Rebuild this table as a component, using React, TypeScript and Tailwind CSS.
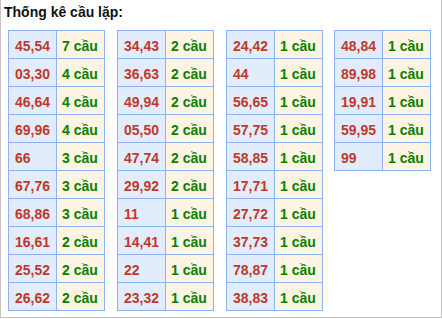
import React from "react";

type Row = [string, string];

const tables: Row[][] = [
  [
    ["45,54", "7 cầu"],
    ["03,30", "4 cầu"],
    ["46,64", "4 cầu"],
    ["69,96", "4 cầu"],
    ["66", "3 cầu"],
    ["67,76", "3 cầu"],
    ["68,86", "3 cầu"],
    ["16,61", "2 cầu"],
    ["25,52", "2 cầu"],
    ["26,62", "2 cầu"],
  ],
  [
    ["34,43", "2 cầu"],
    ["36,63", "2 cầu"],
    ["49,94", "2 cầu"],
    ["05,50", "2 cầu"],
    ["47,74", "2 cầu"],
    ["29,92", "2 cầu"],
    ["11", "1 cầu"],
    ["14,41", "1 cầu"],
    ["22", "1 cầu"],
    ["23,32", "1 cầu"],
  ],
  [
    ["24,42", "1 cầu"],
    ["44", "1 cầu"],
    ["56,65", "1 cầu"],
    ["57,75", "1 cầu"],
    ["58,85", "1 cầu"],
    ["17,71", "1 cầu"],
    ["27,72", "1 cầu"],
    ["37,73", "1 cầu"],
    ["78,87", "1 cầu"],
    ["38,83", "1 cầu"],
  ],
  [
    ["48,84", "1 cầu"],
    ["89,98", "1 cầu"],
    ["19,91", "1 cầu"],
    ["59,95", "1 cầu"],
    ["99", "1 cầu"],
  ],
];

function Table({ rows }: { rows: Row[] }) {
  return (
    <div className="grid grid-cols-[48px_48px] w-[97px] border-l border-t border-[#8fb2f2]">
      {rows.map(([num, count], i) => (
        <React.Fragment key={i}>
          <div className="h-[28px] border-r border-b border-[#8fb2f2] bg-[#e1edfd] pl-[6px] pt-[7px] leading-[16px] text-[14px] font-bold text-[#c0392b] whitespace-nowrap">
            {num}
          </div>
          <div className="h-[28px] border-r border-b border-[#8fb2f2] bg-[#fdf4e3] pl-[5px] pt-[7px] leading-[16px] text-[14px] font-bold text-[#0a8000] whitespace-nowrap">
            {count}
          </div>
        </React.Fragment>
      ))}
    </div>
  );
}

export default function App() {
  return (
    <div
      className="w-[442px] h-[318px] bg-white border-l border-r border-b border-[#c4c4c4]"
      style={{ fontFamily: '"Liberation Sans", Arial, sans-serif' }}
    >
      <div className="pl-[3px] pt-[4px] h-[30px] text-[14px] leading-[16px] font-bold text-[#111]">
        Thống kê cầu lặp:
      </div>
      <div className="flex items-start pl-[7px]">
        <div className="mr-[12px]">
          <Table rows={tables[0]} />
        </div>
        <div className="mr-[12px]">
          <Table rows={tables[1]} />
        </div>
        <div className="mr-[11px]">
          <Table rows={tables[2]} />
        </div>
        <div>
          <Table rows={tables[3]} />
        </div>
      </div>
    </div>
  );
}
